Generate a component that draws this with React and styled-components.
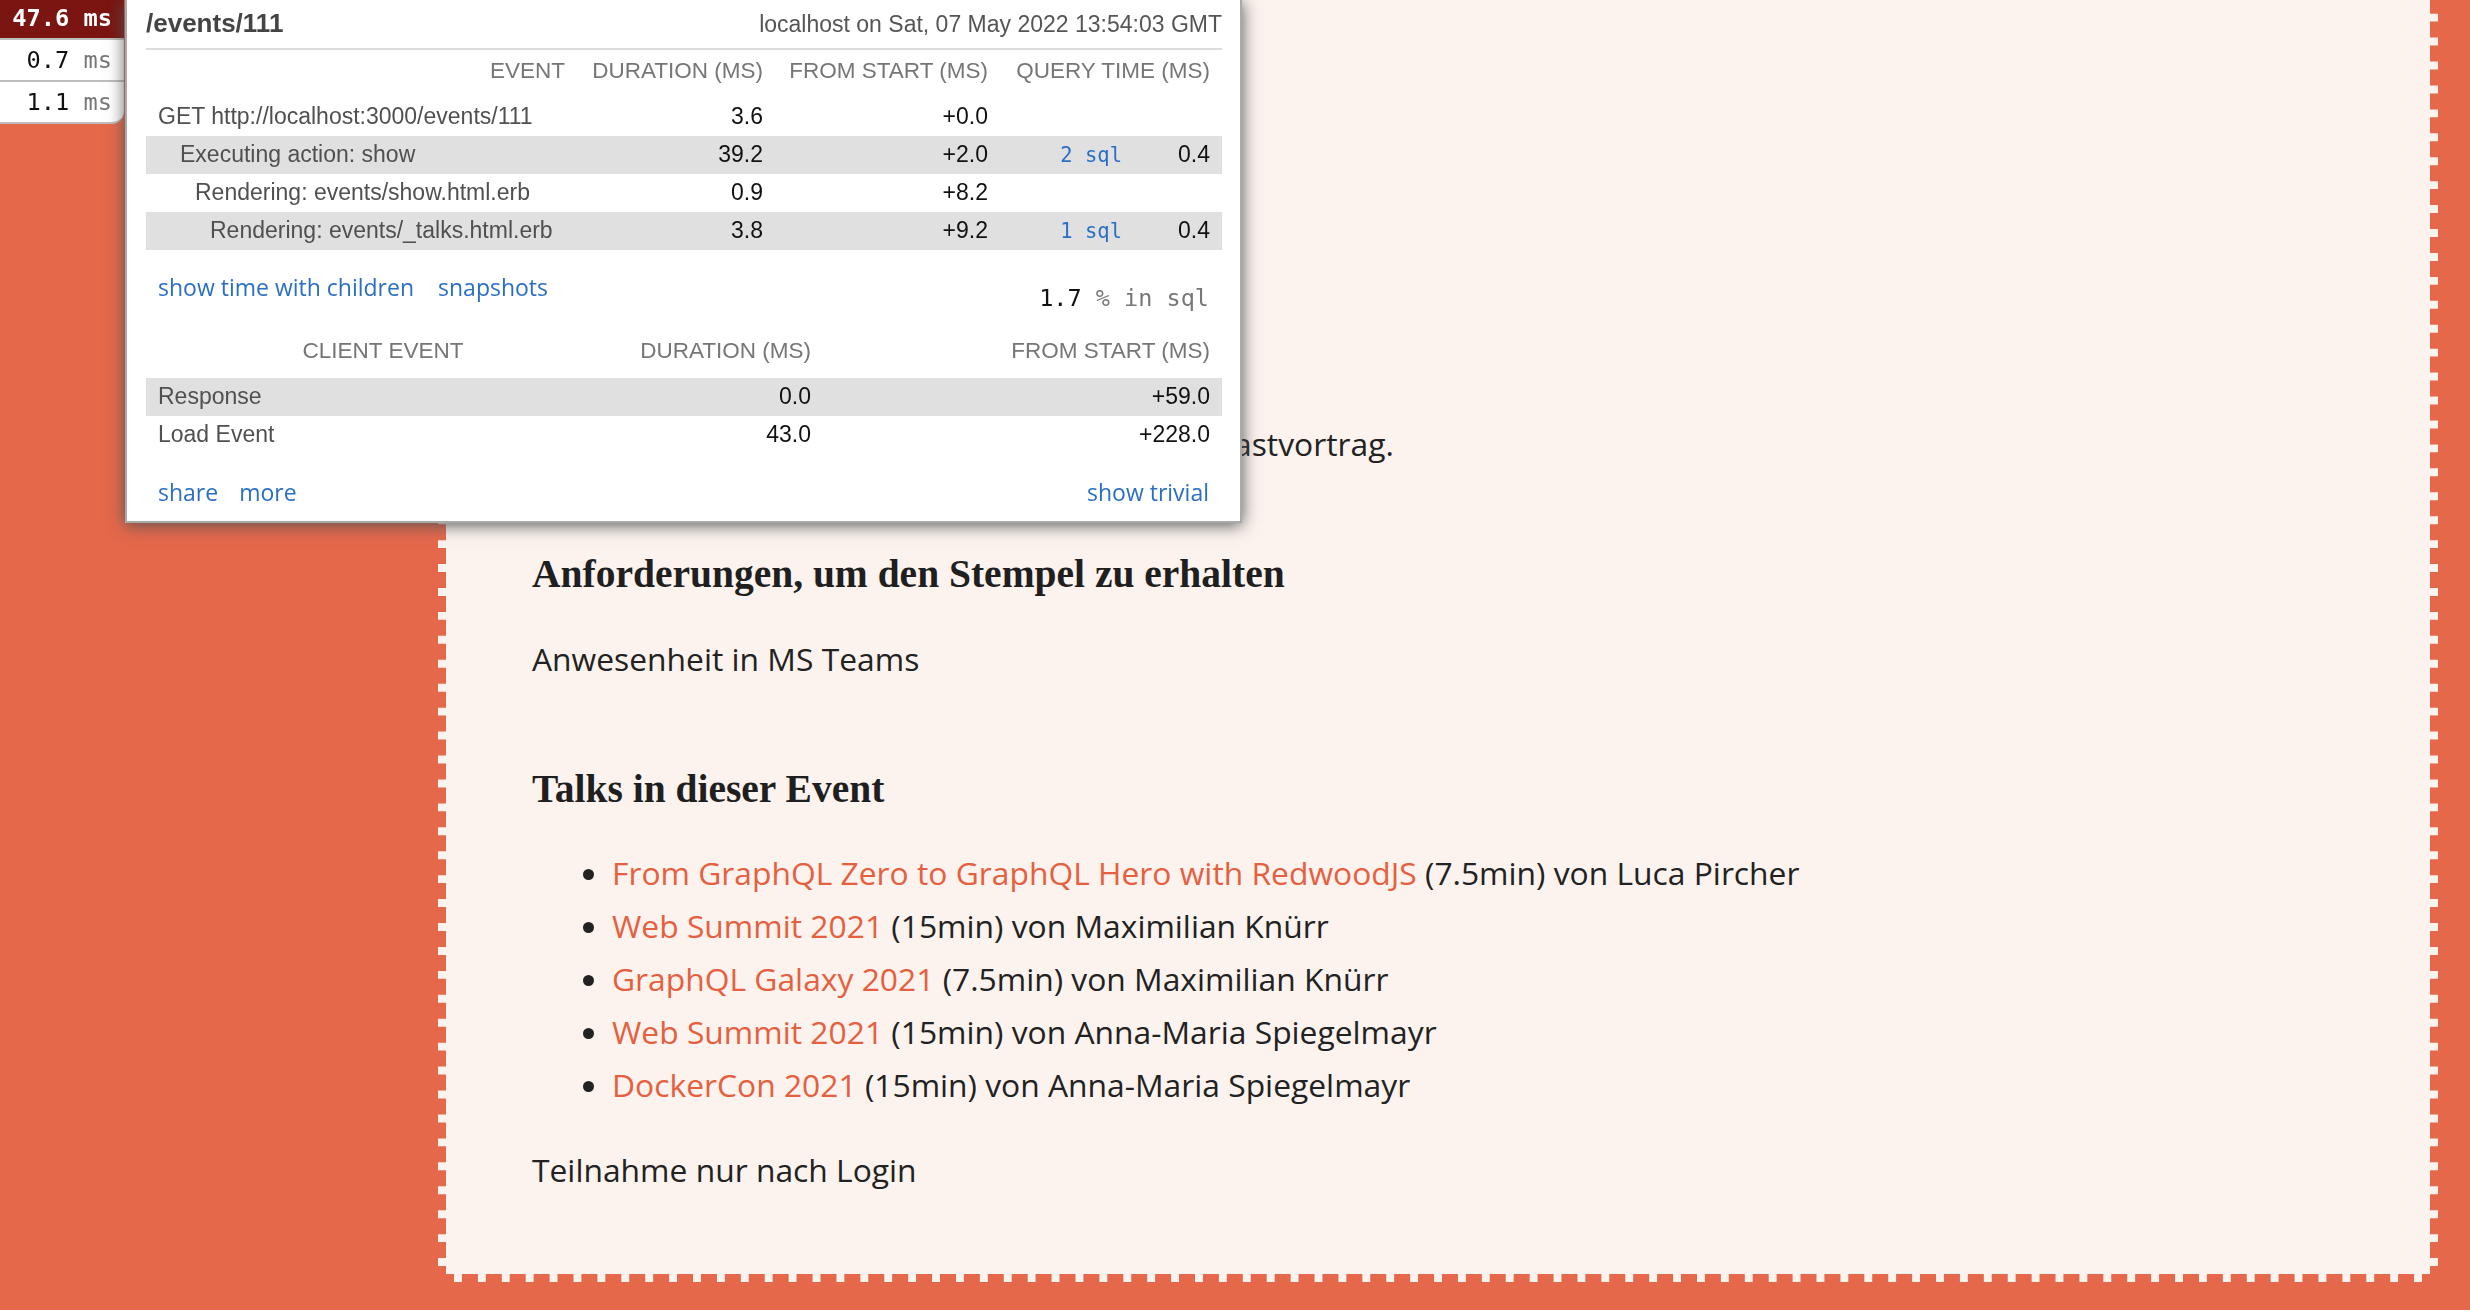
import React from "react";
import styled, { createGlobalStyle } from "styled-components";

const GlobalStyle = createGlobalStyle`
  html, body {
    margin: 0;
    padding: 0;
    height: 100%;
    overflow: hidden;
    background-color: #e5684b;
  }
`;

const Page = styled.div`
  height: 100vh;
  box-sizing: border-box;
  display: flex;
  flex-direction: column;
  justify-content: flex-end;
  padding: 0 32px 28px 438px;
  overflow: hidden;
`;

/* the page is scrolled to its end: the card runs on above the window */
const Card = styled.main`
  flex-shrink: 0;
  min-height: 100vh;
  display: flex;
  flex-direction: column;
  justify-content: flex-end;
  background-color: #fcf3ee;
  border: 8px dashed #e5684b;
  padding: 0 86px 78px;
  font-family: "Open Sans", sans-serif;
  font-size: 31.8px;
  line-height: 53px;
  color: #222;
`;

const SectionTitle = styled.h3`
  font-family: "Liberation Serif", serif;
  font-weight: 700;
  font-size: 39.5px;
  line-height: 1.2;
  color: #1f1f1f;
  margin: 81px 0 33px;
`;

const Text = styled.p`
  margin: 0;
`;

const TalkList = styled.ul`
  margin: 0 0 32px;
  padding-left: 80px;
`;

const TalkLink = styled.a`
  color: #e5603f;
  text-decoration: none;
`;

/* mini profiler overlay */

const Profiler = styled.div`
  position: fixed;
  top: 0;
  left: 0;
  display: flex;
  align-items: flex-start;
  gap: 1px;
  z-index: 10;
`;

const Badges = styled.div`
  width: 124px;
  margin-top: -2px;
  display: flex;
  flex-direction: column;
`;

const Badge = styled.div`
  height: 40px;
  border-bottom: 2px solid #bdbdbd;
  padding-right: 12px;
  text-align: right;
  font-family: "DejaVu Sans Mono", monospace;
  font-size: 23.7px;
  line-height: 40px;
  font-weight: ${({ $active }) => ($active ? 700 : 400)};
  background-color: ${({ $active }) => ($active ? "#7a1511" : "#fff")};
  color: ${({ $active }) => ($active ? "#fff" : "#111")};
  &:last-child {
    border-bottom-right-radius: 12px;
  }
`;

const Unit = styled.span`
  color: ${({ $active }) => ($active ? "#fff" : "#777")};
`;

const Popup = styled.div`
  width: 1117px;
  box-sizing: border-box;
  background: #fff;
  border: 2px solid #a9a9a9;
  border-top: none;
  padding: 0 18px 14px 19px;
  box-shadow: 0 2px 16px #555;
  font-family: "Liberation Sans", Arial, sans-serif;
  font-size: 23px;
`;

const PopupHeader = styled.div`
  display: flex;
  justify-content: space-between;
  align-items: baseline;
  padding: 3px 0 4px;
  border-bottom: 2px solid #ddd;
  color: #555;
`;

const PageName = styled.span`
  font-weight: 700;
  font-size: 26px;
  line-height: 40px;
  color: #444;
`;

const Stamp = styled.span`
  line-height: 40px;
`;

const Row = styled.div`
  display: grid;
  grid-template-columns: ${({ $cols }) => $cols};
  height: 38px;
  line-height: 36px;
  background-color: ${({ $shaded }) => ($shaded ? "#e0e0e0" : "transparent")};
`;

const HeadRow = styled(Row)`
  height: auto;
  line-height: 30px;
  padding: 6px 0 12px;
`;

const Head = styled.div`
  padding: 0 12px;
  text-align: ${({ $align }) => $align || "right"};
  font-size: 22.5px;
  color: #767676;
  text-transform: uppercase;
  white-space: nowrap;
  grid-column: ${({ $span }) => ($span ? `span ${$span}` : "auto")};
`;

const Cell = styled.div`
  padding: 0 12px;
  text-align: right;
  color: #111;
  white-space: nowrap;
`;

const EventCell = styled(Cell)`
  text-align: left;
  color: #505050;
  padding-left: ${({ $indent }) => $indent}px;
`;

const SqlLink = styled.a`
  font-family: "DejaVu Sans Mono", monospace;
  font-size: 20.5px;
  color: #2b6fc5;
  text-decoration: none;
`;

const LinkBar = styled.div`
  display: flex;
  justify-content: space-between;
  align-items: flex-start;
  padding: 0 13px 0 12px;
  margin-top: ${({ $top }) => $top}px;
`;

const LinkGroup = styled.div`
  display: flex;
  gap: ${({ $gap }) => $gap}px;
`;

const ToolLink = styled.a`
  font-family: "Open Sans", sans-serif;
  font-size: 23px;
  line-height: 30px;
  color: #2b6fc5;
  text-decoration: none;
`;

const SqlSummary = styled.div`
  margin-top: 11px;
  font-family: "DejaVu Sans Mono", monospace;
  font-size: 23.5px;
  line-height: 30px;
  color: #111;
  span {
    color: #777;
  }
`;

const ClientHead = styled(HeadRow)`
  margin-top: 17px;
`;

const serverCols = "431px 198px 225px 134px 88px";
const clientCols = "474px 203px 399px";

const timings = [
  { name: "GET http://localhost:3000/events/111", indent: 12, duration: "3.6", start: "+0.0" },
  { name: "Executing action: show", indent: 34, duration: "39.2", start: "+2.0", sql: "2 sql", query: "0.4" },
  { name: "Rendering: events/show.html.erb", indent: 49, duration: "0.9", start: "+8.2" },
  { name: "Rendering: events/_talks.html.erb", indent: 64, duration: "3.8", start: "+9.2", sql: "1 sql", query: "0.4" },
];

const clientTimings = [
  { name: "Response", duration: "0.0", start: "+59.0" },
  { name: "Load Event", duration: "43.0", start: "+228.0" },
];

const badges = [
  { value: "47.6", active: true },
  { value: "0.7" },
  { value: "1.1" },
];

const talks = [
  { title: "From GraphQL Zero to GraphQL Hero with RedwoodJS", rest: "(7.5min) von Luca Pircher" },
  { title: "Web Summit 2021", rest: "(15min) von Maximilian Knürr" },
  { title: "GraphQL Galaxy 2021", rest: "(7.5min) von Maximilian Knürr" },
  { title: "Web Summit 2021", rest: "(15min) von Anna-Maria Spiegelmayr" },
  { title: "DockerCon 2021", rest: "(15min) von Anna-Maria Spiegelmayr" },
];

function MiniProfiler() {
  return (
    <Profiler>
      <Badges>
        {badges.map((b, i) => (
          <Badge key={i} $active={b.active}>
            {b.value} <Unit $active={b.active}>ms</Unit>
          </Badge>
        ))}
      </Badges>
      <Popup>
        <PopupHeader>
          <PageName>/events/111</PageName>
          <Stamp>localhost on Sat, 07 May 2022 13:54:03 GMT</Stamp>
        </PopupHeader>

        <HeadRow $cols={serverCols}>
          <Head>Event</Head>
          <Head>Duration (ms)</Head>
          <Head>From start (ms)</Head>
          <Head $span={2}>Query time (ms)</Head>
        </HeadRow>
        {timings.map((t, i) => (
          <Row key={t.name} $cols={serverCols} $shaded={i % 2 === 1}>
            <EventCell $indent={t.indent}>{t.name}</EventCell>
            <Cell>{t.duration}</Cell>
            <Cell>{t.start}</Cell>
            <Cell>{t.sql && <SqlLink href="#">{t.sql}</SqlLink>}</Cell>
            <Cell>{t.query}</Cell>
          </Row>
        ))}

        <LinkBar $top={22}>
          <LinkGroup $gap={24}>
            <ToolLink href="#">show time with children</ToolLink>
            <ToolLink href="#">snapshots</ToolLink>
          </LinkGroup>
          <SqlSummary>
            1.7 <span>% in sql</span>
          </SqlSummary>
        </LinkBar>

        <ClientHead $cols={clientCols}>
          <Head $align="center">Client Event</Head>
          <Head>Duration (ms)</Head>
          <Head>From start (ms)</Head>
        </ClientHead>
        {clientTimings.map((t, i) => (
          <Row key={t.name} $cols={clientCols} $shaded={i % 2 === 0}>
            <EventCell $indent={12}>{t.name}</EventCell>
            <Cell>{t.duration}</Cell>
            <Cell>{t.start}</Cell>
          </Row>
        ))}

        <LinkBar $top={23}>
          <LinkGroup $gap={21}>
            <ToolLink href="#">share</ToolLink>
            <ToolLink href="#">more</ToolLink>
          </LinkGroup>
          <ToolLink href="#">show trivial</ToolLink>
        </LinkBar>
      </Popup>
    </Profiler>
  );
}

export default function App() {
  return (
    <>
      <GlobalStyle />
      <Page>
        <Card>
          <SectionTitle>Beschreibung</SectionTitle>
          <Text>Die Teilnahme bei diesem Onlinetalk zählt als Gastvortrag.</Text>

          <SectionTitle>Anforderungen, um den Stempel zu erhalten</SectionTitle>
          <Text>Anwesenheit in MS Teams</Text>

          <SectionTitle>Talks in dieser Event</SectionTitle>
          <TalkList>
            {talks.map((t, i) => (
              <li key={i}>
                <TalkLink href="#">{t.title}</TalkLink> {t.rest}
              </li>
            ))}
          </TalkList>

          <Text>Teilnahme nur nach Login</Text>
        </Card>
      </Page>
      <MiniProfiler />
    </>
  );
}
